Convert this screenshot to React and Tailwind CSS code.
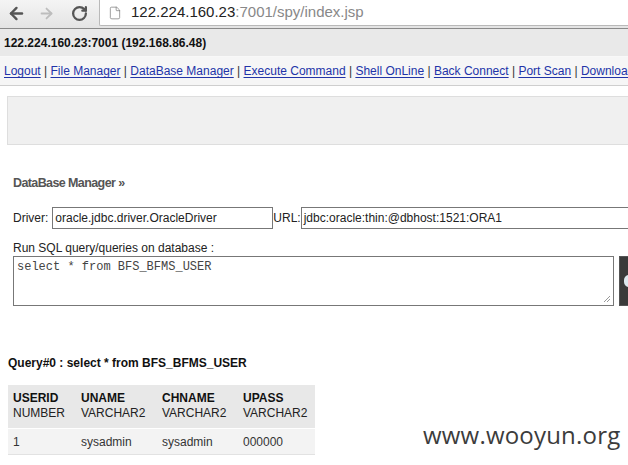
import React from 'react';
import { ArrowLeft, ArrowRight, RotateCw, File } from 'lucide-react';

const links = ['Logout', 'File Manager', 'DataBase Manager', 'Execute Command', 'Shell OnLine', 'Back Connect', 'Port Scan', 'Download'];

const columns = [
  { name: 'USERID', type: 'NUMBER', w: 'w-[68px]' },
  { name: 'UNAME', type: 'VARCHAR2', w: 'w-[81px]' },
  { name: 'CHNAME', type: 'VARCHAR2', w: 'w-[81px]' },
  { name: 'UPASS', type: 'VARCHAR2', w: 'w-[77px]' },
];

const rows = [['1', 'sysadmin', 'sysadmin', '000000']];

const App = () => {
  return (
    <div className="relative w-[628px] h-[465px] overflow-hidden bg-white text-[12px] text-[#222] font-['Liberation_Sans',Arial,sans-serif]">
      {/* browser chrome */}
      <div className="h-[29px] flex bg-gradient-to-b from-[#f4f4f4] to-[#e4e4e4] border-b border-[#8a8a8a]">
        <div className="flex items-center h-[26px] pl-[7px] gap-[10px]">
          <ArrowLeft size={19} strokeWidth={3} className="text-[#555]" />
          <ArrowRight size={17} strokeWidth={2.5} className="text-[#bdbdbd] ml-[2px]" />
          <RotateCw size={17} strokeWidth={3.2} className="text-[#555] ml-[6px]" />
        </div>
        <div className="ml-[11px] flex-1 h-[26px] bg-white border-l border-b border-[#b9b9b9] rounded-bl-[2px] flex items-center pl-[8px]">
          <File size={14} strokeWidth={1.2} className="text-[#777]" />
          <span className="ml-[9px] text-[15px] text-[#222] whitespace-nowrap">
            122.224.160.23<span className="text-[#888]">:7001/spy/index.jsp</span>
          </span>
        </div>
      </div>

      {/* host bar */}
      <div className="h-[28px] bg-[#e9e9e9] border-b border-[#f8f8f8] flex items-center px-[4px] font-bold text-[#111] whitespace-nowrap">
        122.224.160.23:7001 (192.168.86.48)
      </div>

      {/* nav */}
      <div className="h-[29px] bg-[#f6f6f6] border-b border-[#cfcfcf] px-[4px] leading-[28px] whitespace-nowrap">
        {links.map((l, i) => (
          <React.Fragment key={l}>
            {i > 0 && <span className="text-[#333]">{' | '}</span>}
            <a className="text-[#2234a8] underline underline-offset-[2px]">{l}</a>
          </React.Fragment>
        ))}
      </div>

      <div className="pl-[7px] pt-[10px]">
        <div className="w-[640px] h-[49px] bg-[#f0f0f0] border border-[#dedede]" />
      </div>

      <div className="pl-[13px]">
        <div className="mt-[30px] font-bold text-[12.5px] text-[#555] tracking-[-0.6px] leading-[16px]">DataBase Manager »</div>

        <div className="mt-[16px] flex items-center whitespace-nowrap">
          <span>Driver:</span>
          <div className="ml-[4px] w-[221px] h-[22px] border border-[#777] flex items-center px-[2px] shrink-0">oracle.jdbc.driver.OracleDriver</div>
          <span>URL:</span>
          <div className="w-[340px] h-[22px] border border-[#777] flex items-center px-[2px] shrink-0">jdbc:oracle:thin:@dbhost:1521:ORA1</div>
        </div>

        <div className="mt-[12px] leading-[14px]">Run SQL query/queries on database :</div>
        <div className="flex mt-[1px]">
          <div className="relative w-[601px] h-[50px] border border-[#777] px-[3px] pt-[1px] font-['Liberation_Mono','Courier_New',monospace] text-[12px] text-[#444] shrink-0">
            select * from BFS_BFMS_USER
            <svg className="absolute right-[2px] bottom-[2px]" width="8" height="8" viewBox="0 0 8 8">
              <path d="M7 1 L1 7 M7 4 L4 7" stroke="#999" strokeWidth="1" />
            </svg>
          </div>
          <div className="ml-[5px] w-[20px] h-[50px] bg-[#3a3a3a] border border-[#555] shrink-0 flex items-center pl-[4px]">
            <div className="w-[10px] h-[12px] rounded-full bg-[#dde8ee]" />
          </div>
        </div>
      </div>

      <div className="pl-[8px] mt-[50px]">
        <div className="font-bold text-[#111] leading-[14px]">Query#0 : select * from BFS_BFMS_USER</div>
        <table className="mt-[15px] border-collapse">
          <thead>
            <tr className="bg-[#e8e8e8] border-b border-white">
              {columns.map((c) => (
                <th key={c.name} className={`${c.w} text-left align-top px-[5px] pt-[6px] pb-[7px] font-normal leading-[15px]`}>
                  <div className="font-bold text-[#111]">{c.name}</div>
                  <div className="text-[#222]">{c.type}</div>
                </th>
              ))}
            </tr>
          </thead>
          <tbody>
            {rows.map((r, i) => (
              <tr key={i} className="bg-[#f3f3f3] border-b border-[#e2e2e2]">
                {r.map((v, j) => (
                  <td key={j} className="px-[5px] h-[26px] text-[#333]">{v}</td>
                ))}
              </tr>
            ))}
          </tbody>
        </table>
      </div>

      <div className="absolute left-[423px] top-[417px] text-[24px] text-[#3c3c3c] font-['Open_Sans',sans-serif] tracking-[0.2px]">www.wooyun.org</div>
    </div>
  );
};

export default App;
